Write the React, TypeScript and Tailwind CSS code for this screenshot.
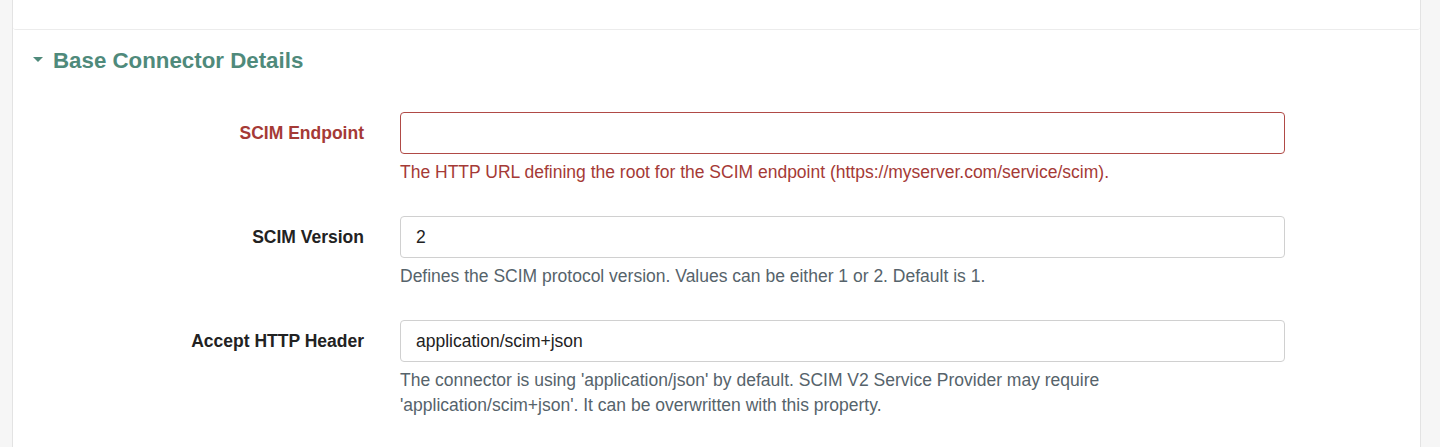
import React from 'react'

type Field = {
  label: string
  value: string
  help: string[]
  error?: boolean
}

const fields: Field[] = [
  {
    label: 'SCIM Endpoint',
    value: '',
    help: ['The HTTP URL defining the root for the SCIM endpoint (https://myserver.com/service/scim).'],
    error: true,
  },
  {
    label: 'SCIM Version',
    value: '2',
    help: ['Defines the SCIM protocol version. Values can be either 1 or 2. Default is 1.'],
  },
  {
    label: 'Accept HTTP Header',
    value: 'application/scim+json',
    help: [
      "The connector is using 'application/json' by default. SCIM V2 Service Provider may require",
      "'application/scim+json'. It can be overwritten with this property.",
    ],
  },
]

export default function App() {
  return (
    <div
      className="h-[447px] w-[1440px] bg-[#f6f6f6] overflow-hidden"
      style={{ fontFamily: '"Liberation Sans", Arial, sans-serif' }}
    >
      <div className="ml-[12px] w-[1409px] h-full bg-white border-x border-[#e3e3e3]">
        {/* previous card */}
        <div className="h-[30px] border-b border-[#ececec] rounded-b-[3px]"></div>

        {/* Section */}
        <div className="pl-[20px] pt-[16px]">
          <h2 className="flex items-center text-[22.3px] leading-[30px] font-bold text-[#4f8a7b]">
            <span className="w-0 h-0 border-x-[5px] border-x-transparent border-t-[5px] border-t-[#4f8a7b] mr-[10px] mb-[3px]"></span>
            Base Connector Details
          </h2>
        </div>

        <div className="mt-[36px] flex flex-col gap-[31px]">
          {fields.map((f) => (
            <div key={f.label} className="flex">
              <div className="w-[351px] shrink-0 h-[42px] flex items-center justify-end">
                <label
                  className={`text-[17.5px] font-bold ${f.error ? 'text-[#a53a36]' : 'text-[#222]'}`}
                >
                  {f.label}
                </label>
              </div>
              <div className="ml-[36px] w-[885px]">
                <input
                  type="text"
                  readOnly
                  value={f.value}
                  className={`block w-full h-[42px] px-[15px] text-[17.5px] text-[#222] bg-white rounded-[4px] border outline-none ${
                    f.error ? 'border-[#b04a46]' : 'border-[#d0d0d0]'
                  }`}
                  style={{ fontFamily: '"Liberation Sans", Arial, sans-serif' }}
                />
                <div
                  className={`mt-[6px] text-[17.5px] leading-[25px] ${f.error ? 'text-[#a53a36]' : 'text-[#56636b]'}`}
                >
                  {f.help.map((line) => (
                    <div key={line}>{line}</div>
                  ))}
                </div>
              </div>
            </div>
          ))}
        </div>
      </div>
    </div>
  )
}
